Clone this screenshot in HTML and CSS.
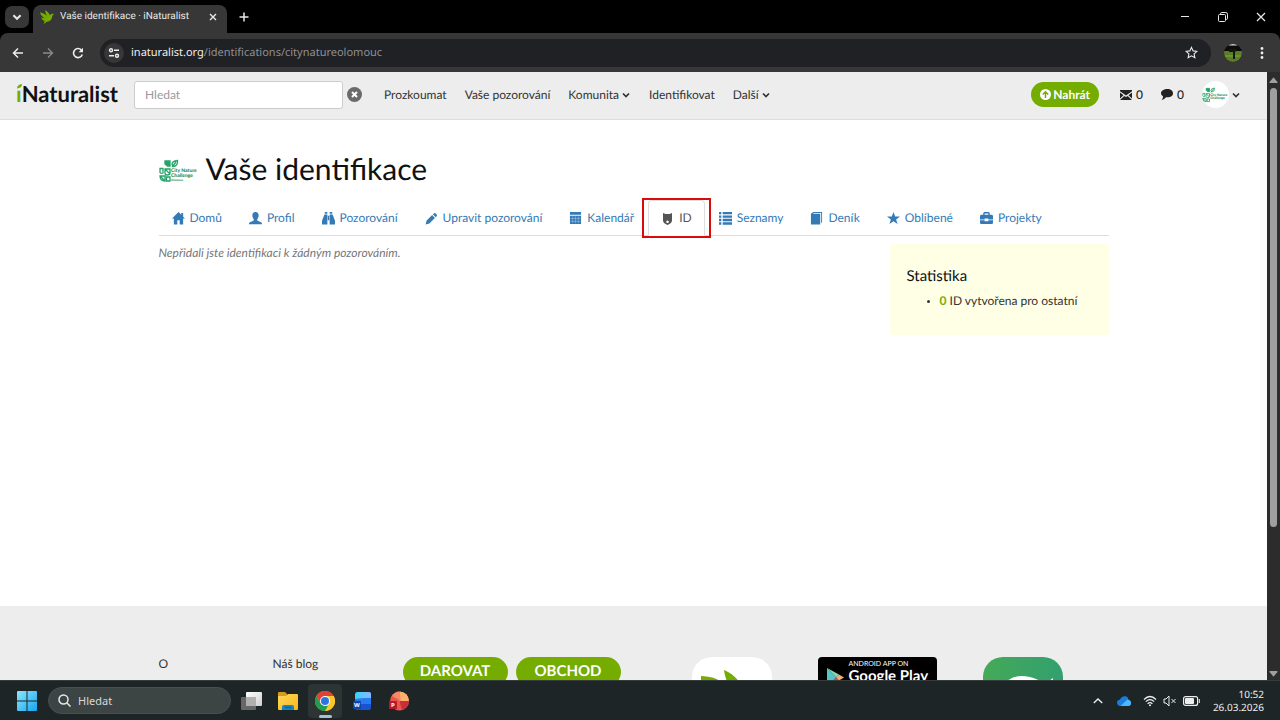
FILE: index.html
```html
<!DOCTYPE html>
<html lang="cs">
<head>
<meta charset="utf-8">
<meta name="viewport" content="width=device-width, initial-scale=1">
<title>Vaše identifikace · iNaturalist</title>
<link rel="stylesheet" href="styles.css">
</head>
<body>
<svg class="sprite" aria-hidden="true">
  <symbol id="leaves" viewBox="0 0 40 24">
    <g fill="none" stroke="#26a36b" stroke-width="1.300">
      <path fill="#26a36b" d="M6 2h5v5H8.500L6 5z"/>
      <path d="M13 5.500Q13 2 18.500 1.500q.5 5.500-4 6zM13 8l4-5"/>
      <path d="M1 13V9.500h3V14q-3 1-3-1zM6 10h5v4q0 2-2.500 2T6 14zM1 17h5v5q-5 0-5-5zM7.500 18H11v4H7.500zM6 10l5 5M1 17l5 5"/>
    </g>
  </symbol>
  <symbol id="chev" viewBox="0 0 10 10"><path d="M2 3.500l3 3 3-3" fill="none" stroke="currentColor" stroke-width="1.700"/></symbol>
</svg>

<header class="titlebar">
  <button class="tab-search" aria-label="Hledat karty"><svg viewBox="0 0 10 10" width="12" height="12"><use href="#chev"/></svg></button>
  <div class="browser-tab">
    <svg width="14" height="14" viewBox="0 0 24 24"><path fill="#74ac00" d="M0 4C5 6 9 7 12 11 10 7 9 4 9 0c4 3 7 5 8 9 2-3 5-3 7-2l-3 3c0 6-4 10-9 10l-6 4 2-5c-3-1-5-3-6-6 2 1 4 1 6 1C4 12 1 9 0 4z"/></svg>
    <span class="tab-title">Vaše identifikace · iNaturalist</span>
    <button class="icon-btn" aria-label="Zavřít kartu"><svg width="10" height="10" viewBox="0 0 10 10"><path d="M2 2l6 6M8 2L2 8" stroke="currentColor" stroke-width="1.400"/></svg></button>
  </div>
  <button class="icon-btn new-tab" aria-label="Nová karta"><svg width="10" height="10" viewBox="0 0 10 10"><path d="M5 .5v9M.5 5h9" stroke="currentColor" stroke-width="1.500"/></svg></button>
  <div class="window-buttons">
    <button class="icon-btn" aria-label="Minimalizovat"><svg width="10" height="10" viewBox="0 0 10 10"><path d="M1 4.500h8" stroke="currentColor"/></svg></button>
    <button class="icon-btn" aria-label="Obnovit"><svg width="10" height="10" viewBox="0 0 10 10"><path d="M2.500 2.500V1.800q0-1.300 1.300-1.300h4q1.700 0 1.700 1.700v4q0 1.300-1.300 1.300h-.7M1.500 2.500h5q1 0 1 1v5q0 1-1 1h-5q-1 0-1-1v-5q0-1 1-1z" fill="none" stroke="currentColor"/></svg></button>
    <button class="icon-btn" aria-label="Zavřít"><svg width="10" height="10" viewBox="0 0 10 10"><path d="M1 1l8 8M9 1L1 9" stroke="currentColor" stroke-width="1.200"/></svg></button>
  </div>
</header>

<div class="toolbar">
  <button class="icon-btn" aria-label="Zpět"><svg width="12" height="12" viewBox="0 0 12 12"><path d="M11 6H2M6 1.500L1.500 6 6 10.500" fill="none" stroke="currentColor" stroke-width="1.500"/></svg></button>
  <button class="icon-btn dim" aria-label="Vpřed"><svg width="12" height="12" viewBox="0 0 12 12"><path d="M1 6h9M6 1.500L10.500 6 6 10.500" fill="none" stroke="currentColor" stroke-width="1.300"/></svg></button>
  <button class="icon-btn" aria-label="Načíst znovu"><svg width="12" height="12" viewBox="0 0 12 12"><path d="M10.300 7.500A4.500 4.500 0 1 1 9.500 3.200" fill="none" stroke="currentColor" stroke-width="1.600"/><path d="M11 .8v4.400H6.600z" fill="currentColor"/></svg></button>
  <div class="address">
    <button class="site-info" aria-label="Informace o webu"><svg width="12" height="12" viewBox="0 0 12 12" fill="none" stroke="currentColor" stroke-width="1.400"><circle cx="3" cy="3.300" r="1.500"/><path d="M6 3.300h5M1 8.700h5"/><circle cx="9" cy="8.700" r="1.500"/></svg></button>
    <span class="url">inaturalist.org<span class="url-path">/identifications/citynatureolomouc</span></span>
    <button class="icon-btn" aria-label="Přidat záložku"><svg width="13" height="13" viewBox="0 0 24 24"><path d="M12 2.500l3 6.500 7 .8-5.200 4.800 1.400 7-6.200-3.500-6.200 3.500 1.400-7L2 9.800 9 9z" fill="none" stroke="currentColor" stroke-width="2"/></svg></button>
  </div>
  <button class="icon-btn" aria-label="Profil prohlížeče"><svg width="18" height="18" viewBox="0 0 18 18"><clipPath id="pc"><circle cx="9" cy="9" r="9"/></clipPath><g clip-path="url(#pc)"><path fill="#0b0d08" d="M0 0h18v18H0z"/><path fill="#5b7d27" d="M0 7h18v11H0z"/><path fill="#6d9034" d="M1 11h16v2H1z"/><path fill="#d7d8d2" d="M5 0h8v1.500H5z"/><path fill="#15180d" d="M5 5h8l-1 2.500h-1V15H9V8H5z"/></g></svg></button>
  <button class="icon-btn" aria-label="Nabídka"><svg width="4" height="14" viewBox="0 0 4 14" fill="currentColor"><circle cx="2" cy="2.500" r="1.400"/><circle cx="2" cy="7" r="1.400"/><circle cx="2" cy="11.500" r="1.400"/></svg></button>
</div>

<div class="viewport">
  <div class="page">
    <header class="site-header">
      <a class="logo" href="#" aria-label="iNaturalist"><span class="logo-i">ı<svg class="leaf" viewBox="0 0 5 5"><path d="M0 4.500Q0 .5 5 0 5 4 0 4.500z" fill="#74ac00"/></svg></span>Naturalist</a>
      <form class="site-search">
        <input type="text" placeholder="Hledat" aria-label="Hledat">
        <button type="button" class="icon-btn" aria-label="Vymazat"><svg width="15" height="15" viewBox="0 0 15 15"><circle cx="7.500" cy="7.500" r="7.500" fill="#6a6a6a"/><path d="M5 5l5 5M10 5l-5 5" stroke="#fff" stroke-width="2"/></svg></button>
      </form>
      <nav class="main-nav">
        <a href="#">Prozkoumat</a>
        <a href="#">Vaše pozorování</a>
        <a href="#">Komunita<svg class="chev"><use href="#chev"/></svg></a>
        <a href="#">Identifikovat</a>
        <a href="#">Další<svg class="chev"><use href="#chev"/></svg></a>
      </nav>
      <div class="user-nav">
        <a class="upload" href="#"><svg width="11" height="11" viewBox="0 0 11 11"><circle cx="5.500" cy="5.500" r="5.500" fill="#fff"/><path d="M5.500 9V3M2.800 5.500l2.700-2.700 2.700 2.700" fill="none" stroke="#74ac00" stroke-width="1.500"/></svg>Nahrát</a>
        <a class="count" href="#"><svg width="12" height="10" viewBox="0 0 12 10" fill="currentColor"><path d="M0 0h12v1.200L6 5.500 0 1.200zM0 2.600l3.500 2.600L0 8.600zM12 2.600v6L8.500 5.200zM4.300 5.900L6 7l1.700-1.100L12 10H0z"/></svg>0</a>
        <a class="count" href="#"><svg width="12" height="11" viewBox="0 0 12 11" fill="currentColor"><path d="M6.500 0C9.700 0 12 1.700 12 4.200S9.700 8.300 6.500 8.300c-.5 0-1 0-1.500-.1C3.800 9.700 2.300 10.700.6 10.900 1.700 9.900 2 8.600 2 7.200.7 6.400 0 5.400 0 4.200 0 1.700 3 0 6.500 0z"/></svg>0</a>
        <a class="account" href="#" aria-label="Účet"><span class="avatar"><svg width="27" height="16" viewBox="0 0 40 24"><use href="#leaves"/><g class="cnc-name"><text x="12" y="13">City Nature</text><text x="12" y="18">Challenge</text></g></svg></span><svg class="chev"><use href="#chev"/></svg></a>
      </div>
    </header>

    <main class="container">
      <h1><svg width="40" height="24" viewBox="0 0 40 24"><use href="#leaves"/><g class="cnc-name"><text x="12" y="13">City Nature</text><text x="12" y="18">Challenge</text><text class="cnc-city" x="12" y="22">Olomouc</text></g></svg>Vaše identifikace</h1>
      <nav class="tabs">
        <a href="#"><svg viewBox="0 0 14 14"><path d="M7 0L0 7h2v6.500h3.700V9h2.600v4.500H12V7h2l-2-2V1h-2v2z"/></svg>Domů</a>
        <a href="#"><svg viewBox="0 0 14 14"><path d="M7 0c2.200 0 3.400 1.400 3.400 3.700 0 1.700-.7 3-1.500 3.800v1.600l4 1.900c.8.400 1.100 1 1.100 2.300H0c0-1.300.3-1.900 1.100-2.300l4-1.900V7.500C4.300 6.700 3.600 5.400 3.600 3.700 3.600 1.400 4.800 0 7 0z"/></svg>Profil</a>
        <a href="#"><svg viewBox="0 0 14 14"><path d="M3 0h2.700v2H3zM8.300 0H11v2H8.300zM2.600 2.700h3.200V13.500H0V9.500zM8.200 2.700h3.200L14 9.500v4H8.200zM6.300 4h1.400v5H6.300z"/></svg>Pozorování</a>
        <a href="#"><svg viewBox="0 0 14 14"><path d="M9.500 1.500q1-.9 2 .1l1 1q.9 1 0 2l-1 1-3-3.100zM7.700 3.300l3 3.100-6 6L.6 13.500l1.200-4.300z"/></svg>Upravit pozorování</a>
        <a href="#"><svg viewBox="0 0 14 14"><path d="M1 0h12v3H1zM1 4h12v9H1z"/><path d="M4 4.500V12M7 4.500V12M10 4.500V12M1.500 7h11M1.500 10h11" stroke="#fff" stroke-width=".3"/></svg>Kalendář</a>
        <a class="active" href="#" aria-current="page"><svg viewBox="0 0 13 13"><path fill-rule="evenodd" d="M2 1l2.500 1h4L11 1v7.500Q11 11 6.500 13 2 11 2 8.500zM6.500 8.500a1.300 1.300 0 1 0 .01 0z"/></svg>ID<span class="highlight"></span></a>
        <a href="#"><svg viewBox="0 0 14 14"><path d="M0 0h2.500v2.500H0zM4 0h10v2.500H4zM0 3.700h2.500v2.500H0zM4 3.700h10v2.500H4zM0 7.400h2.500v2.500H0zM4 7.400h10v2.500H4zM0 11.100h2.500v2.500H0zM4 11.100h10v2.500H4z"/></svg>Seznamy</a>
        <a href="#"><svg viewBox="0 0 14 14"><path d="M3.500 0H13v11l-1 1V1H4L3 2h8v11.500H1V2z"/></svg>Deník</a>
        <a href="#"><svg viewBox="0 0 14 14"><path d="M7 0l1.800 4.800H14L9.800 8l1.600 5L7 10l-4.400 3 1.600-5L0 4.800h5.200z"/></svg>Oblíbené</a>
        <a href="#"><svg viewBox="0 0 14 14"><path d="M4.500 0h5l1 1v2H13l1 1v4H9V7H5v1H0V4l1-1h2.500V1zM5 1.500V3h4V1.500zM0 9h5v1h4V9h5v3l-1 1H1l-1-1z" fill-rule="evenodd"/></svg>Projekty</a>
      </nav>
      <div class="columns">
        <p class="empty">Nepřidali jste identifikaci k žádným pozorováním.</p>
        <aside class="stats">
          <h2>Statistika</h2>
          <ul><li><a href="#">0</a> ID vytvořena pro ostatní</li></ul>
        </aside>
      </div>
    </main>

    <footer class="site-footer">
      <div class="container footer-row">
        <a class="col-about" href="#">O</a>
        <a class="col-blog" href="#">Náš blog</a>
        <div class="pills"><a href="#">DAROVAT</a><a href="#">OBCHOD</a></div>
        <div class="apps">
          <a class="app app-white" href="#" aria-label="iNaturalist"><svg viewBox="0 0 80 80"><path fill="#74ac00" d="M9 19c9 1 15 1 21 7 3 2 5 4 8 6-3-7-5-12-6-19 7 3 12 7 16 13l4 8c5-4 13-4 18 2l-7 4c-3 15-14 25-32 25-12-4-22-22-22-46z"/></svg></a>
          <a class="play" href="#"><svg width="17" height="19" viewBox="0 0 17 19"><path fill="#57c5c7" d="M0 0v19l9-9.500z"/><path fill="#8bd3b0" d="M0 0l12 6.500-3 3z"/><path fill="#f6ad6b" d="M12 6.500l5 3-5 3-3-3z"/><path fill="#e3486b" d="M0 19l12-6.500-3-3z"/></svg><span class="play-text"><small>ANDROID APP ON</small><b>Google Play</b></span></a>
          <a class="app app-green" href="#" aria-label="Seek"><svg viewBox="0 0 80 80"><path d="M18 32Q25 19 38 19t24 8l8-6q0 30-28 36-22-2-24-25z" fill="#fff"/></svg></a>
        </div>
      </div>
    </footer>
  </div>
  <div class="scrollbar" aria-hidden="true">
    <svg width="9" height="8" viewBox="0 0 9 8"><path d="M4.500 1.500q.5 0 1 1L8.500 6q.5 1-.5 1H1q-1 0-.5-1l3-3.500q.5-1 1-1z" fill="#9f9f9f"/></svg>
    <div class="track"><div class="thumb"></div></div>
    <svg width="9" height="8" viewBox="0 0 9 8"><path d="M4.500 6.500q.5 0 1-1L8.500 2q.5-1-.5-1H1Q0 1 .5 2l3 3.500q.5 1 1 1z" fill="#9f9f9f"/></svg>
  </div>
</div>

<footer class="taskbar">
  <button class="icon-btn" aria-label="Start"><svg width="20" height="20" viewBox="0 0 20 20"><defs><linearGradient id="win" x2="1" y2="1"><stop stop-color="#8ce6ff"/><stop offset="1" stop-color="#16a5ef"/></linearGradient></defs><path fill="url(#win)" d="M0 1q0-1 1-1h8.500v9.500H0zM10.500 0H19q1 0 1 1v8.500h-9.500zM0 10.500h9.500V20H1q-1 0-1-1zM10.500 10.500H20V19q0 1-1 1h-8.500z"/></svg></button>
  <label class="task-search"><svg width="13" height="13" viewBox="0 0 13 13"><circle cx="5.500" cy="5.500" r="4.500" fill="none" stroke="#e8e8e8" stroke-width="1.500"/><path d="M9 9l3.500 3.500" stroke="#e8e8e8" stroke-width="1.500"/></svg><input type="text" placeholder="Hledat" aria-label="Hledat ve Windows"></label>
  <div class="task-apps">
    <button aria-label="Zobrazení úloh"><svg width="21" height="20" viewBox="0 0 21 20"><defs><linearGradient id="tv" x2="1" y2="1"><stop stop-color="#fff"/><stop offset="1" stop-color="#cfcfcf"/></linearGradient></defs><rect y="6" width="15" height="13" rx="1" fill="#676767"/><rect x="5" y="1" width="16" height="14" rx="1" fill="url(#tv)"/><path d="M5 6h10v9H5z" fill="#b0b0b0"/></svg></button>
    <button aria-label="Průzkumník"><svg width="20" height="20" viewBox="0 0 20 20"><defs><linearGradient id="fo" x2="1" y2="1"><stop stop-color="#ffd95b"/><stop offset="1" stop-color="#f7b718"/></linearGradient></defs><path fill="#d89b1c" d="M0 2q0-1 1-1h6l2 2v5H0z"/><path fill="url(#fo)" d="M0 5h8l2-2h9q1 0 1 1v14q0 1-1 1H1q-1 0-1-1z"/><path fill="#1782c7" d="M4 19v-3q0-2 2-2h8q2 0 2 2v3z"/><path fill="#0b5796" d="M7 16h6v1H7z"/></svg></button>
    <button class="running" aria-label="Chrome"><svg width="20" height="20" viewBox="0 0 20 20"><circle cx="10" cy="10" r="10" fill="#fbc52b"/><path fill="#df4236" d="M1.300 5A10 10 0 0 1 18.700 5H10l-4.300 7.500z"/><path fill="#239b50" d="M1.300 5l4.400 7.500L10 15h4.300L10 20A10 10 0 0 1 1.300 5z"/><path fill="#fbc52b" d="M10 5h8.700A10 10 0 0 1 10 20l4.300-7.500z"/><circle cx="10" cy="10" r="5" fill="#fff"/><circle cx="10" cy="10" r="4" fill="#2877e5"/></svg></button>
    <button aria-label="Word"><svg width="18" height="20" viewBox="0 0 18 20"><defs><linearGradient id="wd" x2="1"><stop stop-color="#36d4f6"/><stop offset="1" stop-color="#8eb5ff"/></linearGradient></defs><rect x="2" y="1" width="16" height="18" rx="2" fill="#1953cf"/><path fill="url(#wd)" d="M2 8V4q0-3 3-3h11q2 0 2 2v4z"/><path fill="#277bf0" d="M2 8l16-1v6H2z"/><rect y="10" width="8" height="8" rx="1" fill="#1242ae"/><text class="app-letter" x="1" y="16">W</text></svg></button>
    <button aria-label="PowerPoint"><svg width="20" height="20" viewBox="0 0 20 20"><circle cx="10.500" cy="10" r="9.500" fill="#e75945"/><path fill="#ffb06e" d="M10.500.5A9.500 9.500 0 0 1 20 10l-9.500 1z"/><path fill="#f78767" d="M10 .5L12 10l-9-5Q6 .5 10 .5z"/><path fill="#c92e3e" d="M10.500 10H20q-1 7-7 9z"/><rect y="10" width="8" height="8" rx="1" fill="#b51734"/><text class="app-letter" x="2" y="16">P</text></svg></button>
  </div>
  <div class="tray">
    <svg width="10" height="10" viewBox="0 0 10 10"><path d="M.8 7L5 3l4.200 4" fill="none" stroke="#eee" stroke-width="1.400"/></svg>
    <svg class="cloud" width="14" height="10" viewBox="0 0 14 10"><path fill="#187dde" d="M3.500 10Q0 9.500 0 6.700 0 4 3 3.500 5 0 8 .2q3 .2 3.500 3.500Q14 4.500 14 7q0 3-3 3z"/><path fill="#4db6ff" d="M3.500 10l7-6.400Q14 4.500 14 7q0 3-3 3z"/></svg>
    <svg width="14" height="12" viewBox="0 0 14 12" fill="none" stroke="#eee" stroke-width="1.200"><path d="M1 4.500q6-6 12 0M2.800 6.700q4.200-4.200 8.400 0M4.600 8.700q2.400-2.300 4.800 0"/><circle cx="7" cy="10.300" r="1" fill="#eee" stroke="none"/></svg>
    <svg width="14" height="12" viewBox="0 0 14 12" fill="none" stroke="#eee"><path d="M1 4h2l3-3v10L3 8H1zM8.500 4l4 4M12.500 4l-4 4"/></svg>
    <svg width="17" height="10" viewBox="0 0 17 10"><rect x=".6" y=".6" width="14" height="8.800" rx="2" fill="none" stroke="#eee" stroke-width="1.200"/><rect x="2" y="2" width="9" height="6" rx="1" fill="#eee"/><path d="M16.300 3v4" stroke="#eee"/></svg>
    <div class="clock"><span>10:52</span><span>26.03.2026</span></div>
  </div>
</footer>
</body>
</html>
```

FILE: styles.css
```css
* { box-sizing: border-box; }
body {
  margin: 0;
  height: 100vh;
  display: flex;
  flex-direction: column;
  overflow: hidden;
  background: #000;
  font: 12px/20px Lato, "Liberation Sans", sans-serif;
  text-rendering: geometricPrecision;
  color: #333;
}
a { color: inherit; text-decoration: none; }
svg { display: block; flex: none; }
button { border: 0; padding: 0; background: none; color: inherit; font: inherit; }
input { border: 0; outline: 0; min-width: 0; font: inherit; }
.sprite { position: absolute; width: 0; height: 0; }
.icon-btn { display: flex; align-items: center; justify-content: center; flex: none; }
.cnc-name { fill: #1b8a58; font: 900 5px Lato, sans-serif; }
.cnc-city { font-size: 3px; }
.app-letter { fill: #fff; font: 700 6px "Open Sans", sans-serif; }

/* Browser window */
.titlebar {
  height: 33px;
  flex: none;
  display: flex;
  align-items: center;
  padding: 0 14px 0 5px;
  color: #e8e8e8;
  background: #000;
}
.tab-search {
  width: 24px;
  height: 22px;
  display: flex;
  align-items: center;
  justify-content: center;
  border-radius: 7px;
  background: #373737;
}
.browser-tab {
  width: 194px;
  height: 28px;
  align-self: flex-end;
  margin-left: 4px;
  padding: 0 9px 4px 7px;
  display: flex;
  align-items: center;
  gap: 6px;
  border-radius: 8px 8px 0 0;
  background: #373737;
  font: 10px/16px Roboto, "Noto Sans", sans-serif;
}
.tab-title { flex: 1; white-space: nowrap; }
.new-tab { margin-left: 12px; }
.window-buttons { margin-left: auto; display: flex; gap: 28px; }
.toolbar {
  height: 39px;
  flex: none;
  display: flex;
  align-items: center;
  gap: 18px;
  padding: 0 16px 0 12px;
  border-radius: 8px 8px 0 0;
  background: #373737;
  color: #eee;
}
.dim { color: #8a8a8a; }
.address {
  flex: 1;
  height: 28px;
  margin: 0 -6px 0 -2px;
  padding: 0 13px 0 4px;
  display: flex;
  align-items: center;
  gap: 7px;
  border-radius: 14px;
  background: #202124;
}
.address + .icon-btn { margin-left: 1px; }
.site-info {
  width: 20px;
  height: 20px;
  display: flex;
  align-items: center;
  justify-content: center;
  border-radius: 10px;
  background: #373737;
}
.url { flex: 1; font: 11px/16px "Noto Sans", "Open Sans", sans-serif; }
.url-path { color: #8f9094; }

.viewport { flex: 1; min-height: 0; display: flex; }
.page {
  flex: 1;
  min-width: 0;
  display: flex;
  flex-direction: column;
  overflow: hidden;
  background: #fff;
}
.scrollbar {
  width: 13px;
  flex: none;
  display: flex;
  flex-direction: column;
  align-items: center;
  gap: 4px;
  padding: 4px 0 2px;
  background: #2c2c2c;
}
.track { flex: 1; width: 7px; }
.thumb { height: 76%; border-radius: 4px; background: #9f9f9f; }

/* Site header */
.site-header {
  height: 48px;
  flex: none;
  display: flex;
  align-items: center;
  padding: 0 26px 2px 16px;
  border-bottom: 1px solid #ddd;
  background: #ededed;
}
.logo { width: 118px; padding-bottom: 2px; font-size: 22px; line-height: 28px; font-weight: 700; color: #111; }
.logo-i { position: relative; color: #74ac00; }
.leaf { position: absolute; left: 1px; top: 4px; width: 5px; height: 5px; }
.site-search { display: flex; align-items: center; gap: 4px; }
.site-search input {
  width: 209px;
  height: 28px;
  padding: 0 10px;
  border: 1px solid #ccc;
  border-radius: 3px;
  background: #fff;
}
.site-search input::placeholder { color: #999; }
.main-nav { display: flex; gap: 18px; margin-left: 22px; white-space: nowrap; }
.main-nav a, .account { display: flex; align-items: center; gap: 2px; }
.chev { width: 10px; height: 10px; }
.user-nav { display: flex; align-items: center; gap: 18px; margin-left: auto; }
.upload {
  height: 25px;
  padding: 0 9px;
  display: flex;
  align-items: center;
  gap: 2px;
  border-radius: 13px;
  background: #74ac00;
  color: #fff;
  font-weight: 700;
}
.count { display: flex; align-items: center; gap: 4px; color: #222; font-weight: 500; }
.upload + .count { margin-left: 3px; }
.avatar {
  width: 27px;
  height: 27px;
  display: flex;
  align-items: center;
  justify-content: center;
  border-radius: 50%;
  background: #fff;
}

/* Page content */
.container { width: 100%; max-width: 950px; margin: 0 auto; }
main.container { flex: 1; padding-top: 30px; }
h1 {
  margin: 0;
  display: flex;
  align-items: center;
  gap: 7px;
  font-size: 30px;
  line-height: 38px;
  font-weight: 400;
  color: #111;
}
h1 svg { margin-top: 4px; }
.tabs {
  margin-top: 12px;
  display: flex;
  gap: 1px;
  border-bottom: 1px solid #ddd;
  white-space: nowrap;
}
.tabs a {
  position: relative;
  height: 36px;
  margin-bottom: -1px;
  padding: 0 12px;
  display: flex;
  align-items: center;
  gap: 5px;
  border: 1px solid transparent;
  border-radius: 4px 4px 0 0;
  color: #337ab7;
}
.tabs svg { width: 13px; height: 13px; fill: currentColor; }
.tabs .active { border-color: #ddd #ddd #fff; color: #555; background: #fff; }
.highlight { position: absolute; inset: -3px -7px; border: 2px solid #d90b0b; }
.columns { display: flex; justify-content: space-between; align-items: flex-start; padding-top: 7px; }
.empty { margin: 0; font-style: italic; color: #777; }
.stats {
  width: 219px;
  margin-top: 1px;
  padding: 22px 17px 24px;
  border-radius: 3px;
  background: #ffffe6;
}
.stats h2 { margin: 0 0 5px; font-size: 15px; line-height: 20px; font-weight: 400; color: #111; }
.stats ul { margin: 0; padding-left: 33px; }
.stats li::marker { font-size: 9px; }
.stats a { color: #74ac00; font-weight: 700; }

/* Site footer: continues below the fold */
.site-footer { height: 74px; flex: none; padding-top: 51px; background: #ededed; }
.footer-row { display: flex; align-items: flex-start; line-height: 14px; }
.col-about { width: 12%; }
.col-blog { width: 130px; }
.pills { display: flex; gap: 8px; }
.pills a {
  width: 105px;
  height: 30px;
  border-radius: 15px;
  background: #74ac00;
  color: #fff;
  font-size: 15px;
  line-height: 29px;
  font-weight: 700;
  text-align: center;
}
.apps { flex: 1; display: flex; justify-content: space-between; margin: 0 46px 0 71px; }
.app { width: 80px; height: 80px; border-radius: 20px; }
.app-white { background: #fff; }
.app-green { background: linear-gradient(90deg, #45a957, #32a06f); }
.play {
  width: 119px;
  height: 40px;
  display: flex;
  gap: 5px;
  padding: 3px 9px;
  border-radius: 4px;
  background: #000;
  color: #fff;
}
.play svg { margin-top: 8px; }
.play-text { display: flex; flex-direction: column; white-space: nowrap; }
.play small { font-size: 7px; line-height: 8px; }
.play b { font-size: 15px; line-height: 16px; }

/* Windows taskbar */
.taskbar {
  height: 40px;
  flex: none;
  display: flex;
  align-items: center;
  padding: 0 16px 0 17px;
  border-top: 1px solid #363c3c;
  background: #1d2526;
  color: #eee;
  font-family: "Noto Sans", "Open Sans", sans-serif;
}
.task-search {
  width: 183px;
  height: 27px;
  margin-left: 11px;
  padding: 0 9px;
  display: flex;
  align-items: center;
  gap: 7px;
  border: 1px solid #4a5050;
  border-radius: 14px;
  background: #3d4444;
}
.task-search input { flex: 1; padding: 0; background: none; font-size: 11px; color: #eee; }
.task-search input::placeholder { color: #d8d8d8; }
.task-apps { display: flex; gap: 3px; margin-left: 3px; }
.task-apps button {
  position: relative;
  width: 34px;
  height: 34px;
  display: flex;
  align-items: center;
  justify-content: center;
  border-radius: 4px;
}
.task-apps .running { background: #2c3434; }
.running::after {
  content: "";
  position: absolute;
  bottom: 0;
  width: 13px;
  height: 3px;
  border-radius: 2px;
  background: #a7c3d2;
}
.tray { margin-left: auto; display: flex; align-items: center; gap: 6px; }
.cloud { margin: 0 6px 0 8px; }
.clock {
  margin-left: 7px;
  display: flex;
  flex-direction: column;
  align-items: flex-end;
  font-size: 10px;
  line-height: 13px;
}
```
